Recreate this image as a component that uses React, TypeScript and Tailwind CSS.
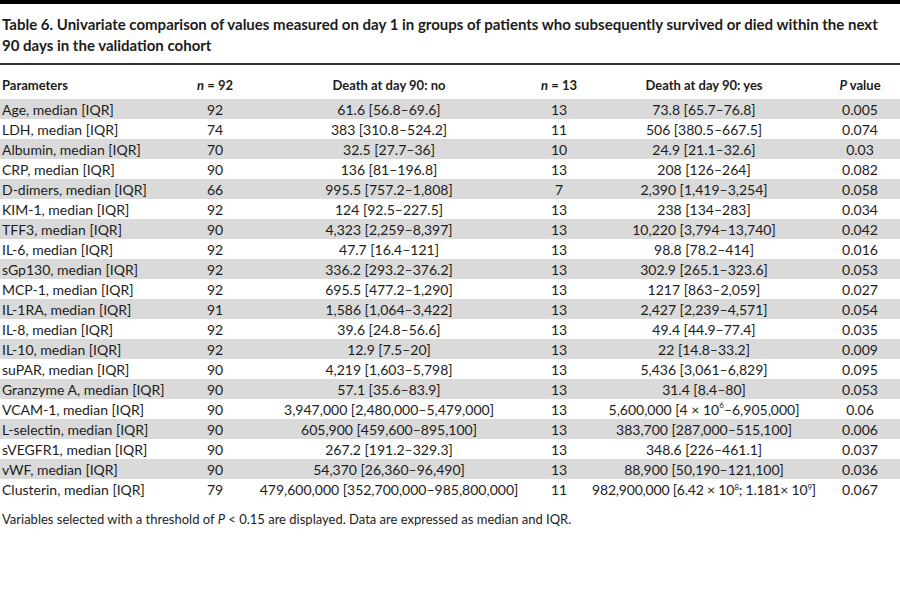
import React from "react";

// Table 6 from the validation cohort: day-1 values by 90-day outcome

type Row = {
  param: string;
  nNo: string;
  no: React.ReactNode;
  nYes: string;
  yes: React.ReactNode;
  p: string;
};

const ROWS: Row[] = [
  { param: "Age, median [IQR]", nNo: "92", no: "61.6 [56.8–69.6]", nYes: "13", yes: "73.8 [65.7–76.8]", p: "0.005" },
  { param: "LDH, median [IQR]", nNo: "74", no: "383 [310.8–524.2]", nYes: "11", yes: "506 [380.5–667.5]", p: "0.074" },
  { param: "Albumin, median [IQR]", nNo: "70", no: "32.5 [27.7–36]", nYes: "10", yes: "24.9 [21.1–32.6]", p: "0.03" },
  { param: "CRP, median [IQR]", nNo: "90", no: "136 [81–196.8]", nYes: "13", yes: "208 [126–264]", p: "0.082" },
  { param: "D-dimers, median [IQR]", nNo: "66", no: "995.5 [757.2–1,808]", nYes: "7", yes: "2,390 [1,419–3,254]", p: "0.058" },
  { param: "KIM-1, median [IQR]", nNo: "92", no: "124 [92.5–227.5]", nYes: "13", yes: "238 [134–283]", p: "0.034" },
  { param: "TFF3, median [IQR]", nNo: "90", no: "4,323 [2,259–8,397]", nYes: "13", yes: "10,220 [3,794–13,740]", p: "0.042" },
  { param: "IL-6, median [IQR]", nNo: "92", no: "47.7 [16.4–121]", nYes: "13", yes: "98.8 [78.2–414]", p: "0.016" },
  { param: "sGp130, median [IQR]", nNo: "92", no: "336.2 [293.2–376.2]", nYes: "13", yes: "302.9 [265.1–323.6]", p: "0.053" },
  { param: "MCP-1, median [IQR]", nNo: "92", no: "695.5 [477.2–1,290]", nYes: "13", yes: "1217 [863–2,059]", p: "0.027" },
  { param: "IL-1RA, median [IQR]", nNo: "91", no: "1,586 [1,064–3,422]", nYes: "13", yes: "2,427 [2,239–4,571]", p: "0.054" },
  { param: "IL-8, median [IQR]", nNo: "92", no: "39.6 [24.8–56.6]", nYes: "13", yes: "49.4 [44.9–77.4]", p: "0.035" },
  { param: "IL-10, median [IQR]", nNo: "92", no: "12.9 [7.5–20]", nYes: "13", yes: "22 [14.8–33.2]", p: "0.009" },
  { param: "suPAR, median [IQR]", nNo: "90", no: "4,219 [1,603–5,798]", nYes: "13", yes: "5,436 [3,061–6,829]", p: "0.095" },
  { param: "Granzyme A, median [IQR]", nNo: "90", no: "57.1 [35.6–83.9]", nYes: "13", yes: "31.4 [8.4–80]", p: "0.053" },
  {
    param: "VCAM-1, median [IQR]",
    nNo: "90",
    no: "3,947,000 [2,480,000–5,479,000]",
    nYes: "13",
    yes: (
      <>
        5,600,000 [4 × 10<sup className="text-[8px] -top-[5px]">6</sup>–6,905,000]
      </>
    ),
    p: "0.06",
  },
  { param: "L-selectin, median [IQR]", nNo: "90", no: "605,900 [459,600–895,100]", nYes: "13", yes: "383,700 [287,000–515,100]", p: "0.006" },
  { param: "sVEGFR1, median [IQR]", nNo: "90", no: "267.2 [191.2–329.3]", nYes: "13", yes: "348.6 [226–461.1]", p: "0.037" },
  { param: "vWF, median [IQR]", nNo: "90", no: "54,370 [26,360–96,490]", nYes: "13", yes: "88,900 [50,190–121,100]", p: "0.036" },
  {
    param: "Clusterin, median [IQR]",
    nNo: "79",
    no: "479,600,000 [352,700,000–985,800,000]",
    nYes: "11",
    yes: (
      <span className="tracking-[-0.2px]">
        982,900,000 [6.42 × 10<sup className="text-[8px] -top-[5px]">8</sup>; 1.181× 10
        <sup className="text-[8px] -top-[5px]">9</sup>]
      </span>
    ),
    p: "0.067",
  },
];

// column centres: 215 / 389 / 559 / 704 / 860
const COLS = "grid grid-cols-[170px_90px_258px_82px_208px_104px]";

function Cell({ children, left }: { children: React.ReactNode; left?: boolean }) {
  return (
    <div className={`flex items-center whitespace-nowrap ${left ? "justify-start pl-[2px]" : "justify-center"}`}>
      {children}
    </div>
  );
}

export default function App() {
  return (
    <div
      className="w-[900px] h-[595px] bg-white text-[#1c1c1c] overflow-hidden"
      style={{ fontFamily: "Lato, 'Noto Sans', sans-serif" }}
    >
      <div className="h-[4px] bg-black" />

      {/* Title */}
      <div className="pt-[10px] pb-[7px] pl-[2px] text-[15px] font-bold leading-[21px]">
        Table 6. Univariate comparison of values measured on day 1 in groups of patients who subsequently survived or
        died within the next
        <br />
        90 days in the validation cohort
      </div>
      <div className="h-[2px] bg-[#333]" />

      {/* Header */}
      <div className={`${COLS} h-[34px] pt-[10px] pb-[2px] text-[13px] font-bold`}>
        <Cell left>Parameters</Cell>
        <Cell>
          <span className="italic">n</span>&nbsp;= 92
        </Cell>
        <Cell>Death at day 90: no</Cell>
        <Cell>
          <span className="italic">n</span>&nbsp;= 13
        </Cell>
        <Cell>Death at day 90: yes</Cell>
        <Cell>
          <span className="italic">P</span>&nbsp;value
        </Cell>
      </div>

      {/* Body */}
      <div className="text-[14px]">
        {ROWS.map((r, i) => (
          <div key={r.param} className={`${COLS} h-[20px] ${i % 2 === 0 ? "bg-[#dadada]" : "bg-white"}`}>
            <Cell left>{r.param}</Cell>
            <Cell>{r.nNo}</Cell>
            <Cell>{r.no}</Cell>
            <Cell>{r.nYes}</Cell>
            <Cell>{r.yes}</Cell>
            <Cell>{r.p}</Cell>
          </div>
        ))}
      </div>

      <div className="pt-[10px] pl-[2px] text-[13px] leading-[20px]">
        Variables selected with a threshold of <span className="italic">P</span> &lt; 0.15 are displayed. Data are
        expressed as median and IQR.
      </div>
    </div>
  );
}
